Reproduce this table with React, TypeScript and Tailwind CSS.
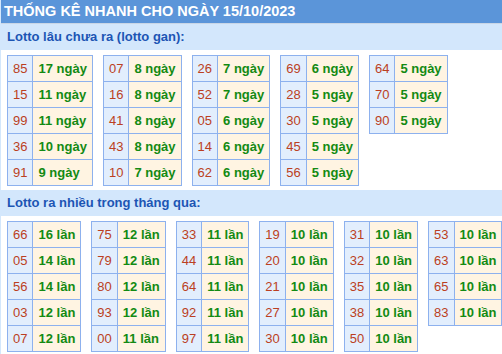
const gan = [
  [['85', 17], ['15', 11], ['99', 11], ['36', 10], ['91', 9]],
  [['07', 8], ['16', 8], ['41', 8], ['43', 8], ['10', 7]],
  [['26', 7], ['52', 7], ['05', 6], ['14', 6], ['62', 6]],
  [['69', 6], ['28', 5], ['30', 5], ['45', 5], ['56', 5]],
  [['64', 5], ['70', 5], ['90', 5]],
] as [string, number][][];

const nhieu = [
  [['66', 16], ['05', 14], ['56', 14], ['03', 12], ['07', 12]],
  [['75', 12], ['79', 12], ['80', 12], ['93', 12], ['00', 11]],
  [['33', 11], ['44', 11], ['64', 11], ['92', 11], ['97', 11]],
  [['19', 10], ['20', 10], ['21', 10], ['27', 10], ['30', 10]],
  [['31', 10], ['32', 10], ['35', 10], ['38', 10], ['50', 10]],
  [['53', 10], ['63', 10], ['65', 10], ['83', 10]],
] as [string, number][][];

function NumTable({ rows, unit }: { rows: [string, number][]; unit: string }) {
  return (
    <table className="border-collapse shrink-0">
      <tbody>
        {rows.map(([n, c]) => (
          <tr key={n} className="h-[26px]">
            <td className="border border-[#8db1ee] bg-[#e2eefd] px-[5px] py-0 text-center text-[13px] text-[#bb3f22]">{n}</td>
            <td className="border border-[#8db1ee] bg-[#fff4e2] px-[5px] py-0 text-[13px] font-bold text-[#138a13] whitespace-nowrap">
              {c} {unit}
            </td>
          </tr>
        ))}
      </tbody>
    </table>
  );
}

function Section({ title, tables, unit }: { title: string; tables: [string, number][][]; unit: string }) {
  return (
    <div>
      <div className="h-[26px] bg-[#d3e7fc] pl-[6px] flex items-center text-[13px] font-bold text-[#1c55b4]">{title}</div>
      <div className="flex items-start gap-[10px] px-[6px] pt-[5px] pb-[4px]">
        {tables.map((t, i) => (
          <NumTable key={i} rows={t} unit={unit} />
        ))}
      </div>
    </div>
  );
}

export default function App() {
  return (
    <div className="w-[502px] h-[354px] overflow-hidden bg-white font-['Liberation_Sans',Arial,sans-serif] border-l border-[#d3e7fc]">
      <div className="h-[23px] bg-[#5b95d9] border-b border-[#c9d6e6] pl-[3px] flex items-center text-[14.5px] font-bold text-white box-content font-['Liberation_Sans_Narrow','Arial_Narrow',sans-serif]">
        THỐNG KÊ NHANH CHO NGÀY 15/10/2023
      </div>
      <Section title="Lotto lâu chưa ra (lotto gan):" tables={gan} unit="ngày" />
      <Section title="Lotto ra nhiều trong tháng qua:" tables={nhieu} unit="lần" />
    </div>
  );
}
